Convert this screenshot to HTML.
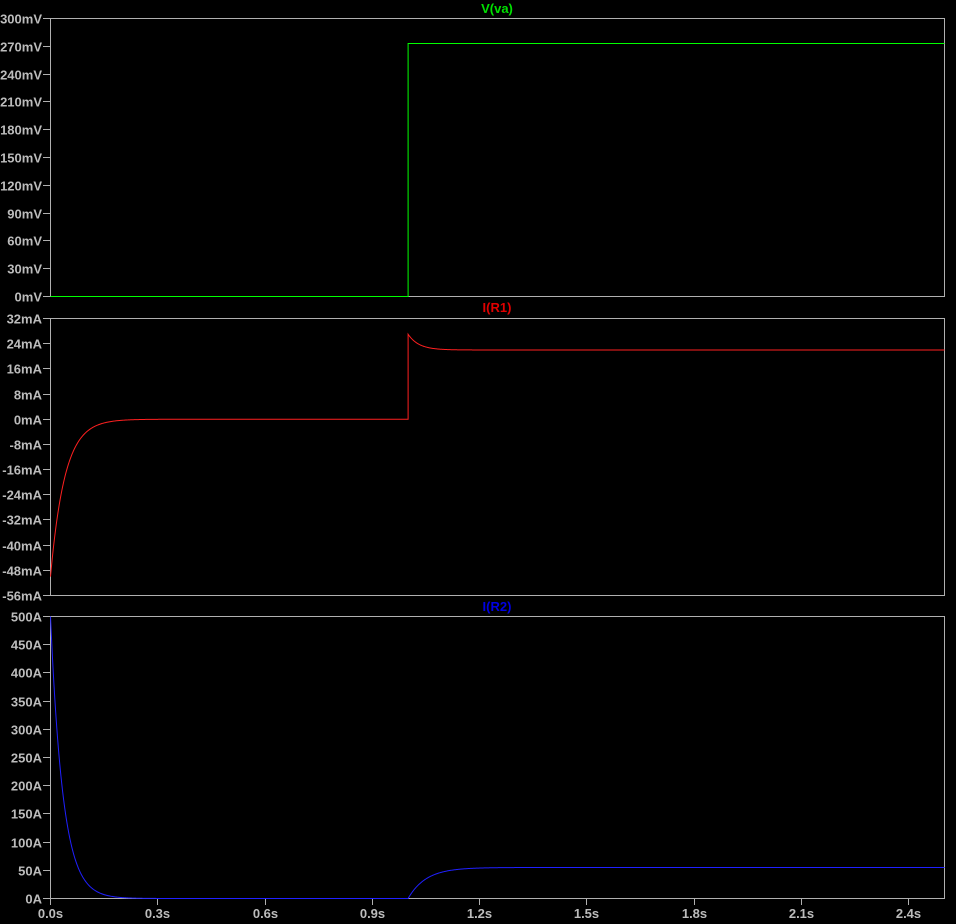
<!DOCTYPE html>
<html><head><meta charset="utf-8"><style>
html,body{margin:0;padding:0;background:#000;width:956px;height:924px;overflow:hidden}
svg{display:block}
text{font-family:"Liberation Sans",Arial,sans-serif;font-size:13px;font-weight:bold;fill:#bcbcbc}
</style></head><body>
<svg id="s" width="956" height="924" xmlns="http://www.w3.org/2000/svg">
<g fill="none" stroke="#b0b0b0" stroke-width="1">
<rect x="50.5" y="18.5" width="894" height="278"/>
<rect x="50.5" y="318.5" width="894" height="277"/>
<rect x="50.5" y="616.5" width="894" height="282"/>
</g>
<g id="lab"></g>
<text x="497" y="13" text-anchor="middle" style="fill:#00e000">V(va)</text>
<text x="497" y="312" text-anchor="middle" style="fill:#e00000">I(R1)</text>
<text x="497" y="611" text-anchor="middle" style="fill:#0000e0">I(R2)</text>
<polyline id="p1" fill="none" stroke="#00ff00" stroke-width="1"/>
<polyline id="p2" fill="none" stroke="#ff2020" stroke-width="1"/>
<polyline id="p3" fill="none" stroke="#2020ff" stroke-width="1"/>
</svg>
<script>
var ns="http://www.w3.org/2000/svg",g=document.getElementById("lab");
function T(x,y,s,a){var t=document.createElementNS(ns,"text");t.setAttribute("x",x);t.setAttribute("y",y);if(a)t.setAttribute("text-anchor",a);t.textContent=s;g.appendChild(t);}
function L(x1,y1,x2,y2){var l=document.createElementNS(ns,"line");l.setAttribute("x1",x1);l.setAttribute("y1",y1);l.setAttribute("x2",x2);l.setAttribute("y2",y2);l.setAttribute("stroke","#b0b0b0");g.appendChild(l);}
function axis(top,bot,labels){var n=labels.length-1;for(var i=0;i<=n;i++){var y=Math.round(top+(bot-top)*i/n)+0.5;L(43,y,50,y);T(42,y+5,labels[i],"end");}}
axis(18,296,["300mV","270mV","240mV","210mV","180mV","150mV","120mV","90mV","60mV","30mV","0mV"]);
axis(318,595,["32mA","24mA","16mA","8mA","0mA","-8mA","-16mA","-24mA","-32mA","-40mA","-48mA","-56mA"]);
axis(616,898,["500A","450A","400A","350A","300A","250A","200A","150A","100A","50A","0A"]);
var xs=["0.0s","0.3s","0.6s","0.9s","1.2s","1.5s","1.8s","2.1s","2.4s"];
for(var i=0;i<9;i++){var x=Math.round(50+357.6*0.3*i)+0.5;L(x,898,x,905);T(x,918,xs[i],"middle");}
function X(t){return 50.5+357.6*t;}
var p1=[],p2=[],p3=[];
function y1(v){return 296.5-v/300*278;}
function y2(v){return 318.5+(32-v)/88*277;}
function y3(v){return 898.5-v/500*282;}
for(var t=0;t<=2.5;t+=0.002){
 var v=t<1?0:273;
 var i2,i3;
 if(t<1){i2=-50*Math.exp(-t/0.04);i3=500*Math.exp(-t/0.035);}
 else{var d=t-1;i2=22+5*Math.exp(-d/0.03);i3=55*(1-Math.exp(-d/0.05));}
 if(Math.abs(t-1)<0.0011){p1.push(X(1)+","+y1(0));p2.push(X(1)+","+y2(0));}
 p1.push(X(t)+","+y1(v));p2.push(X(t)+","+y2(i2));p3.push(X(t)+","+y3(i3));
}
document.getElementById("p1").setAttribute("points",p1.join(" "));
document.getElementById("p2").setAttribute("points",p2.join(" "));
document.getElementById("p3").setAttribute("points",p3.join(" "));
</script>
</body></html>
